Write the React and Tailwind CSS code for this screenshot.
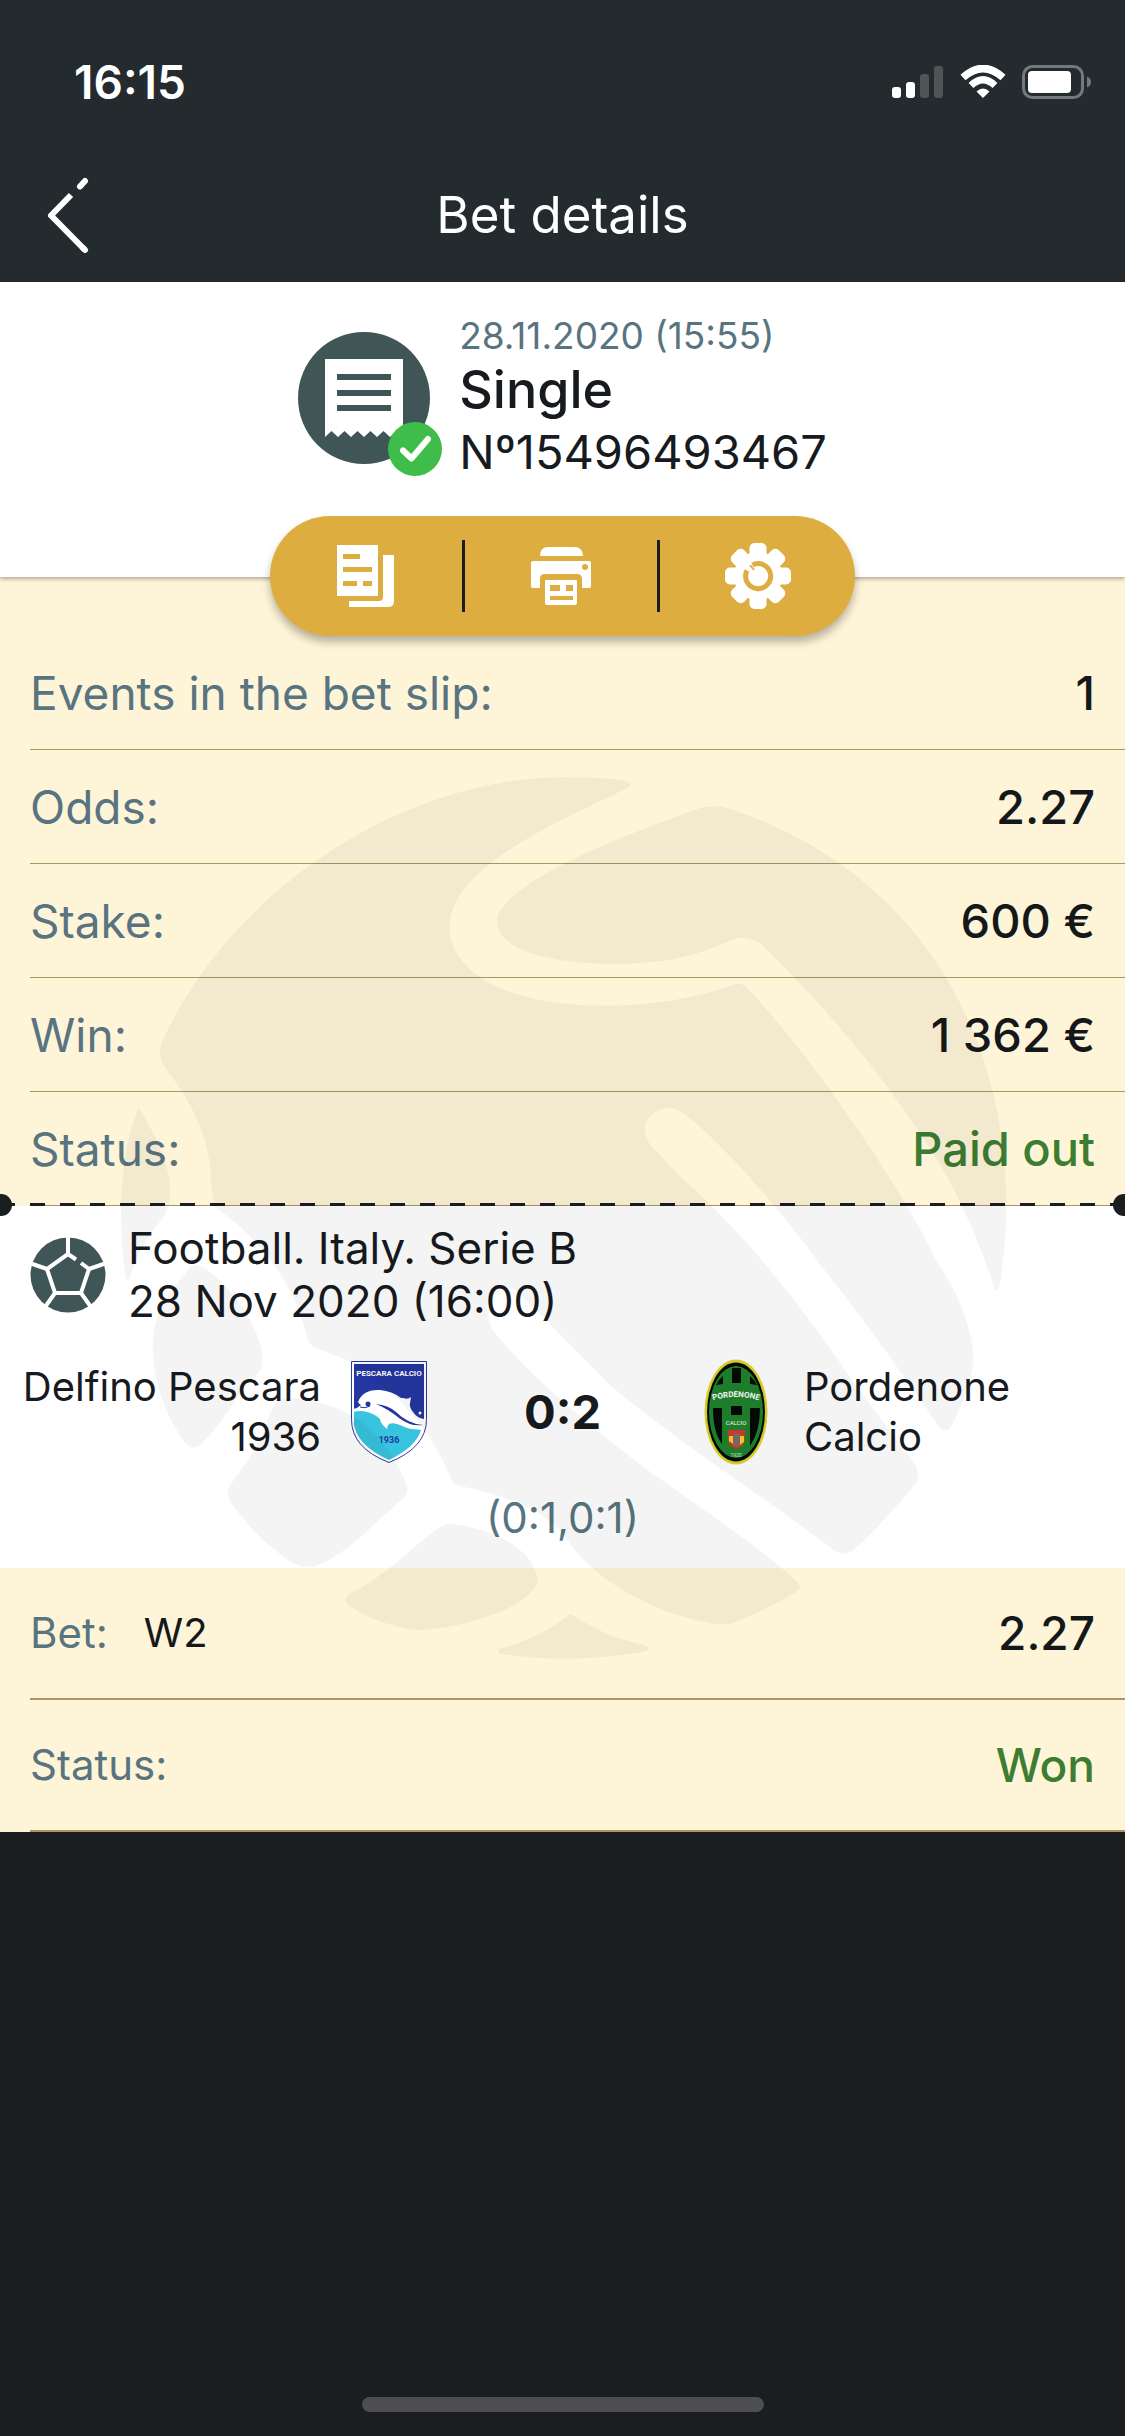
import { clsx } from "clsx";

const BET = {
  date: "28.11.2020 (15:55)",
  type: "Single",
  number: "Nº15496493467",
};

const SUMMARY = [
  { label: "Events in the bet slip:", value: "1" },
  { label: "Odds:", value: "2.27" },
  { label: "Stake:", value: "600 €" },
  { label: "Win:", value: "1 362 €" },
  { label: "Status:", value: "Paid out", positive: true },
];

function StatusBar() {
  return (
    <div className="flex h-[148px] items-start justify-between pt-14 pr-[34px] pl-[74px]">
      <span className="text-[46px] leading-[52px] font-semibold">16:15</span>
      <div className="flex h-[52px] items-center gap-4">
        <svg className="h-[34px] w-[52px]" viewBox="0 0 52 34" fill="#fff">
          <rect x="0" y="22" width="9" height="11" rx="3" />
          <rect x="14" y="17" width="9" height="16" rx="3" />
          <rect x="28" y="9" width="9" height="24" rx="3" opacity=".2" />
          <rect x="42" y="1" width="9" height="32" rx="3" opacity=".2" />
        </svg>
        <svg className="h-[34px] w-[46px]" viewBox="0 0 46 34" fill="none" stroke="#fff">
          <path d="M3 12.500 Q23 -5.500 43 12.500" strokeWidth="7.500" />
          <path d="M11 20.500 Q23 9 35 20.500" strokeWidth="7" />
          <path d="M23 33 L16.500 26.500 Q23 20.500 29.500 26.500 Z" fill="#fff" stroke="none" />
        </svg>
        <svg className="h-[34px] w-[69px]" viewBox="0 0 69 34">
          <rect x="1.500" y="1.500" width="59" height="31" rx="9" fill="none" stroke="#74797b" strokeWidth="3" />
          <rect x="6" y="6" width="43" height="22" rx="4" fill="#fff" />
          <path d="M65 11.500 Q69 13 69 17 Q69 21 65 22.500 Z" fill="#74797b" />
        </svg>
      </div>
    </div>
  );
}

function Header() {
  return (
    <header className="bg-[#232b2e] text-white">
      <StatusBar />
      <div className="grid h-[134px] grid-cols-[134px_1fr_134px] items-center">
        <button type="button" aria-label="Back" className="flex h-full items-center pl-[46px]">
          <svg
            className="h-[80px] w-[46px]"
            viewBox="0 0 46 80"
            fill="none"
            stroke="#fff"
            strokeWidth="6"
            strokeLinecap="round"
            strokeLinejoin="round"
          >
            <path d="M34 11.500 L39 6" />
            <path d="M25 20 L5 40.500 L39 75" strokeLinecap="butt" />
            <path d="M37 73 L39 75" />
          </svg>
        </button>
        <h1 className="text-center text-[51px] leading-[60px]">Bet details</h1>
      </div>
    </header>
  );
}

function TicketIcon() {
  return (
    <svg className="h-[132px] w-[144px] overflow-visible" viewBox="0 0 144 132">
      <circle cx="66" cy="66" r="66" fill="#405656" />
      <path
        d="M27 27h78v78l-6.500-6-6.500 6-6.500-6-6.500 6-6.500-6-6.500 6-6.500-6-6.500 6-6.500-6-6.500 6-6.500-6-6.500 6z"
        fill="#fff"
      />
      <path d="M39 45h54M39 61h54M39 76h54" stroke="#405656" strokeWidth="6" />
      <circle cx="117" cy="117" r="27" fill="#3fbd4b" />
      <path
        d="M105 118.500l8.500 8 16.500-19.500"
        fill="none"
        stroke="#fff"
        strokeWidth="6"
        strokeLinecap="round"
        strokeLinejoin="round"
      />
    </svg>
  );
}

function CopyIcon() {
  return (
    <svg className="h-[62px] w-[58px]" viewBox="0 0 58 62" fill="#fff">
      <path
        fillRule="evenodd"
        d="M0 0h41v51H0zM6 9v5h17V9zM6 22v5h29v-5zM6 36v5h14v-5zM26 36v5h9v-5z"
      />
      <path d="M46 10h11v46q0 6-6 6H12v-6h30q4 0 4-4z" />
    </svg>
  );
}

function PrinterIcon() {
  return (
    <svg className="h-[58px] w-[60px]" viewBox="0 0 60 58" fill="#fff">
      <path d="M9 9q0-9 8-9h26q9 0 9 9z" />
      <path
        fillRule="evenodd"
        d="M2 14h56q2 0 2 2v23q0 2-2 2h-7v-9q0-5-5-5H14q-5 0-5 5v9H2q-2 0-2-2V16q0-2 2-2zM54 17a3 3 0 1 0 0 6 3 3 0 0 0 0-6z"
      />
      <path
        fillRule="evenodd"
        d="M15 33h30q1 0 1 1v22q0 2-2 2H16q-2 0-2-2V34q0-1 1-1zM19 38v6h10v-6zM35 38v6h7v-6zM19 49v4h23v-4z"
      />
    </svg>
  );
}

function GearIcon() {
  return (
    <svg className="h-[66px] w-[66px]" viewBox="0 0 66 66">
      <g fill="#fff">
        {[0, 45, 90, 135].map((angle) => (
          <rect key={angle} x="24.500" y="0" width="17" height="66" rx="5" transform={`rotate(${angle} 33 33)`} />
        ))}
        <circle cx="33" cy="33" r="24" />
      </g>
      <path d="M27.500 22 A12.500 12.500 0 1 1 22 27.500" fill="none" stroke="#ddae3f" strokeWidth="5" />
      <path d="M25 22l4 5" stroke="#ddae3f" strokeWidth="2" />
    </svg>
  );
}

const ACTIONS = [
  { label: "Copy bet slip", icon: CopyIcon },
  { label: "Print", icon: PrinterIcon },
  { label: "Settings", icon: GearIcon },
];

function ActionBar() {
  return (
    <div className="mx-auto mt-[34px] -mb-[59px] grid h-[120px] w-[52%] grid-cols-3 items-center rounded-full bg-[#ddae3f] shadow-[0_6px_8px_rgba(0,0,0,0.28)]">
      {ACTIONS.map(({ label, icon: Icon }, i) => (
        <button
          key={label}
          type="button"
          aria-label={label}
          className={clsx(
            "flex h-[72px] items-center justify-center",
            i < ACTIONS.length - 1 && "border-r-[3px] border-[#1b1e21]"
          )}
        >
          <Icon />
        </button>
      ))}
    </div>
  );
}

function BallIcon() {
  return (
    <svg className="h-[76px] w-[76px] shrink-0" viewBox="0 0 76 76">
      <circle cx="38" cy="38" r="37.500" fill="#405656" />
      <g fill="none" stroke="#fff" strokeWidth="4">
        <path d="M46 22.500 L38 17 L17 32 L25 56 H51 L59 32 L51 26" />
        <path d="M38 0v18M17 32L1 26.500M59 32l16-5.500M25 56l-10 14M51 56l10 14" />
      </g>
    </svg>
  );
}

function PescaraCrest() {
  return (
    <svg className="h-[102px] w-[76px]" viewBox="0 0 76 102">
      <path d="M.5.500h75v58q0 28-37.500 43Q.5 87 .5 58.500z" fill="#fff" stroke="#2a3c9c" />
      <path d="M3 3h70v56q0 5-1 8H4q-1-4-1-8z" fill="#2436a0" />
      <path d="M3 49q20-4 27 5l40 15q-5 17-32 30Q3 83 3 60z" fill="#38c3de" />
      <path
        d="M2 48 q5-1 8-4 q-2-1-3-3 q5-13 22-12 q12 1 21 8 l2 0 q5 2 8-1 l-1 6 q-1 4 3 9 q4 6 11 7 v10 q-12 2-24-4 q-7-3-11-1 q-2 2-2 5 q-7-6-7-10 q-5-5-13-7 q-7-2-14 0z"
        fill="#fff"
      />
      <path d="M25 43q12 1 20 8 q12 12 27 13q-12 2-24-7q-11-9-23-14z" fill="#2436a0" />
      <circle cx="17" cy="43" r="2.500" fill="#2436a0" />
      <path d="M9 46q5 2 10-1" stroke="#2436a0" fill="none" />
      <circle cx="69" cy="52" r="1.500" fill="#fff" />
      <text x="38" y="15" textAnchor="middle" fontSize="8" fontWeight="700" fill="#fff" fontFamily="Roboto, sans-serif">
        PESCARA CALCIO
      </text>
      <text x="38" y="82" textAnchor="middle" fontSize="9" fontWeight="700" fill="#2436a0" fontFamily="Roboto, sans-serif">
        1936
      </text>
    </svg>
  );
}

function PordenoneCrest() {
  return (
    <svg className="h-[106px] w-[64px]" viewBox="0 0 64 106">
      <ellipse cx="32" cy="53" rx="31.500" ry="52.500" fill="#ded52b" />
      <ellipse cx="32" cy="53" rx="29" ry="49.500" fill="#060a06" />
      <ellipse cx="32" cy="53" rx="27" ry="46" fill="#1f832c" />
      <path
        d="M28 9h9v15h-9zM27 47h11v9H27zM12 26q3-6 7-9v8zM53 26q-3-6-7-9v8zM9 49h9v36q-9-12-9-36zM46 49h10q0 24-10 38z"
        fill="#060a06"
      />
      <path id="pordenone-arc" d="M4 43 Q32 33 60 43" fill="none" />
      <text fontSize="8" fontWeight="700" fill="#fff" fontFamily="Roboto, sans-serif">
        <textPath href="#pordenone-arc" startOffset="50%" textAnchor="middle">
          PORDENONE
        </textPath>
      </text>
      <text x="32" y="66" textAnchor="middle" fontSize="6" fill="#fff" fontFamily="Roboto, sans-serif">
        CALCIO
      </text>
      <path d="M24 71h17v9q0 7-8.500 10Q24 87 24 80z" fill="#d7372d" />
      <path d="M25 77h4v8l-4-3zM36 77h4v6l-4 3z" fill="#f0cf2d" />
      <path d="M29 74h7v13h-7z" fill="#846a6a" />
      <text x="32" y="98" textAnchor="middle" fontSize="5" fill="#d8e8d8" fontFamily="Roboto, sans-serif">
        1920
      </text>
    </svg>
  );
}

/* Big faded ball behind the slip */
function Watermark() {
  return (
    <svg
      aria-hidden="true"
      className="pointer-events-none absolute top-[173px] left-1/2 h-[930px] w-[940px] -translate-x-[463px]"
      viewBox="0 0 1568 1568"
      preserveAspectRatio="none"
      fill="#000"
      fillOpacity=".045"
    >
      {/* main body with the two cut-in stripes */}
      <path
        d="M884 56 Q875 46 770 46 C500 48 215 240 102 495 Q96 515 108 535 C158 600 184 660 185 725 Q186 750 193 772
        C250 810 325 890 346 994 Q350 1004 360 1008 L417 1031 Q540 1110 586 1230 Q590 1238 600 1241
        C700 1262 755 1290 785 1340 C830 1405 940 1462 1030 1474 Q1050 1476 1065 1468 Q1120 1445 1162 1419 Q1172 1412 1164 1403
        C1080 1325 950 1245 860 1172 Q720 1060 655 978 C638 945 645 905 690 908
        C740 955 800 1020 850 1070 C960 1165 1110 1260 1225 1350 Q1242 1360 1256 1350 Q1315 1295 1362 1235 Q1368 1222 1360 1205
        L1254 1062 C1160 920 1060 800 974 725 L920 668 C890 630 925 598 960 605
        C1010 630 1140 780 1200 866 Q1290 980 1400 1142 Q1412 1154 1420 1140 Q1452 1080 1457 1028 Q1454 950 1398 866
        C1350 760 1200 530 1080 402 Q1070 390 1056 396 C940 440 780 440 690 410 C600 380 570 320 588 270 C620 180 780 115 878 65 Q887 60 884 56z"
      />
      <path
        d="M1040 96 Q1020 93 1000 98 C870 145 690 215 663 280 C650 350 800 365 890 360 C950 357 1000 345 1050 322 Q1075 310 1100 325
        C1220 440 1340 590 1416 725 Q1465 820 1492 908 Q1498 918 1501 900 Q1512 830 1512 770 C1512 450 1340 190 1040 96z"
      />
      <path d="M65 603 Q38 660 35 770 Q35 850 44 892 Q47 900 50 888 Q70 830 104 790 C130 755 118 690 65 603z" />
      <path d="M161 868 Q150 868 140 886 C100 930 88 970 88 1006 C90 1080 115 1130 142 1168 Q155 1184 171 1168 C210 1130 230 1080 265 1050 C290 1010 230 910 175 874z" />
      <path d="M310 1093 Q290 1090 277 1140 Q265 1175 220 1235 Q208 1250 217 1267 Q260 1330 320 1370 Q342 1382 365 1374 C420 1350 460 1300 506 1262 Q518 1250 509 1233 Q470 1140 395 1110 Q350 1092 310 1093z" />
      <path d="M578 1304 C530 1330 490 1385 415 1424 Q403 1433 415 1442 Q460 1475 530 1484 C620 1480 725 1440 730 1400 C725 1345 650 1310 578 1304z" />
      <path d="M785 1456 Q730 1500 670 1514 Q658 1520 670 1524 Q780 1542 905 1521 Q925 1515 905 1508 Q840 1495 785 1456z" />
    </svg>
  );
}

function SummaryRow({ label, value, positive }) {
  return (
    <div className="ml-[30px] flex h-[114px] items-center justify-between border-b border-[#ad9460] pr-[30px] text-[46px] leading-[56px]">
      <dt className="text-[#587480]">{label}</dt>
      <dd className={clsx("text-[47px] font-medium", positive ? "text-[#3c7d31]" : "text-[#15181a]")}>{value}</dd>
    </div>
  );
}

function Perforation() {
  return (
    <div className="relative h-0">
      <div className="absolute inset-x-0 -top-[3px] h-[3px] bg-[repeating-linear-gradient(90deg,#1b1e21_0_15px,transparent_15px_30px)]" />
      <div className="absolute -top-[12px] left-0 h-[22px] w-[12px] rounded-r-full bg-[#1b1e21]" />
      <div className="absolute -top-[12px] right-0 h-[22px] w-[12px] rounded-l-full bg-[#1b1e21]" />
    </div>
  );
}

function MatchCard() {
  return (
    <section className="bg-white pt-4 pb-5 text-[#171a1e]">
      <div className="flex items-center gap-[22px] pl-[30px]">
        <BallIcon />
        <p className="text-[44px] leading-[53px]">
          Football. Italy. Serie B
          <br />
          28 Nov 2020 (16:00)
        </p>
      </div>
      <div className="mt-[34px] grid grid-cols-[1fr_136px_211px_136px_1fr] items-center text-[40px] leading-[50px]">
        <p className="text-right">
          Delfino Pescara
          <br />
          1936
        </p>
        <div className="flex h-[100px] items-center justify-center">
          <PescaraCrest />
        </div>
        <p className="text-center text-[47px] font-bold">0:2</p>
        <div className="flex h-[100px] items-center justify-center">
          <PordenoneCrest />
        </div>
        <p>
          Pordenone
          <br />
          Calcio
        </p>
      </div>
      <p className="mt-[26px] text-center text-[42px] leading-[60px] text-[#587480]">(0:1,0:1)</p>
    </section>
  );
}

function BetRow({ label, pick, value, positive }) {
  return (
    <div className="ml-[30px] flex h-[132px] items-center border-b-2 border-[#ad9460] pr-[30px] text-[42px] leading-[56px]">
      <dt className="text-[#587480]">{label}</dt>
      {pick && <dd className="ml-9 text-[40px] text-[#15181a]">{pick}</dd>}
      <dd className={clsx("ml-auto text-[46px] font-medium", positive ? "text-[#3c7d31]" : "text-[#15181a]")}>
        {value}
      </dd>
    </div>
  );
}

export default function App() {
  return (
    <div className="flex min-h-screen flex-col bg-[#1b1e21] font-['Inter','Noto_Sans',sans-serif]">
      <Header />
      <main>
        <section className="relative z-10 flow-root bg-white pt-8 shadow-[0_2px_4px_rgba(0,0,0,0.3)]">
          <div className="flex items-center justify-center gap-[17px]">
            <TicketIcon />
            <div className="text-[#171a1e]">
              <p className="text-[37px] leading-[44px] text-[#587480]">{BET.date}</p>
              <p className="text-[52px] leading-[64px] font-medium">{BET.type}</p>
              <p className="text-[47px] leading-[60px]">{BET.number}</p>
            </div>
          </div>
          <ActionBar />
        </section>

        <div className="relative">
          <dl className="bg-[#fef4d8] pt-[59px]">
            {SUMMARY.map((row) => (
              <SummaryRow key={row.label} {...row} />
            ))}
          </dl>
          <Perforation />
          <MatchCard />
          <dl className="bg-[#fef4d8]">
            <BetRow label="Bet:" pick="W2" value="2.27" />
            <BetRow label="Status:" value="Won" positive />
          </dl>
          <Watermark />
        </div>
      </main>
      <div className="mx-auto mt-auto mb-6 h-[15px] w-[402px] rounded-full bg-[#4e4e50]" />
    </div>
  );
}
